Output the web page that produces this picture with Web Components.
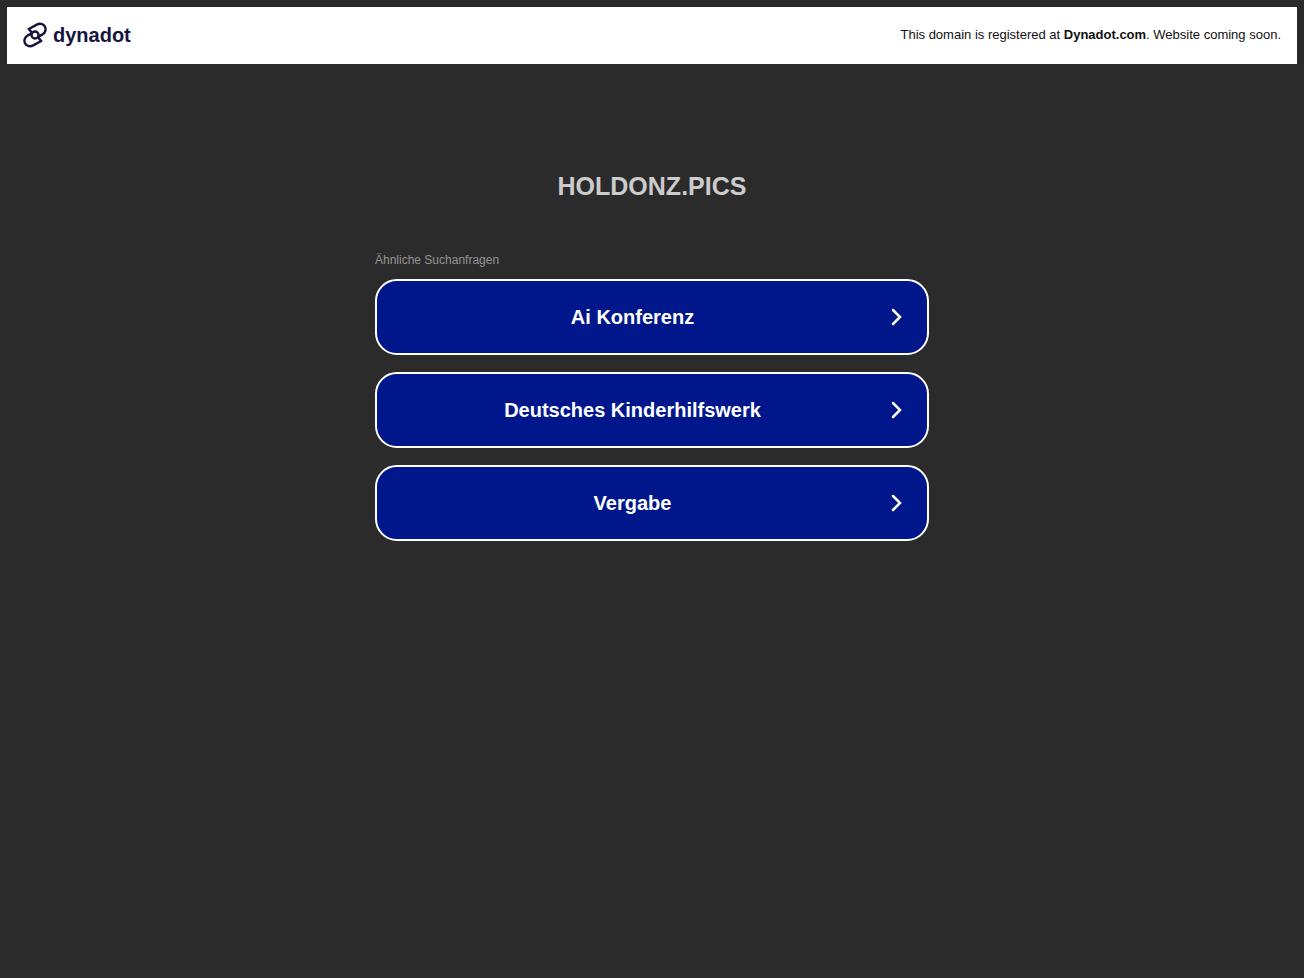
<!DOCTYPE html>
<html lang="de">
<head>
<meta charset="utf-8">
<meta name="viewport" content="width=device-width, initial-scale=1">
<title>holdonz.pics</title>
<style>
  body { margin: 0; background: #2b2b2b; font-family: "Liberation Sans", Arial, sans-serif; }
</style>
</head>
<body>
<parking-page>
  <registrar-bar slot="bar">This domain is registered at <b>Dynadot.com</b>. Website coming soon.</registrar-bar>
  <domain-title>HOLDONZ.PICS</domain-title>
  <related-searches label="Ähnliche Suchanfragen">
    <search-link>Ai Konferenz</search-link>
    <search-link>Deutsches Kinderhilfswerk</search-link>
    <search-link>Vergabe</search-link>
  </related-searches>
</parking-page>
<script>
  const define = (name, html, setup) => {
    const template = document.createElement('template');
    template.innerHTML = html;
    customElements.define(name, class extends HTMLElement {
      constructor() {
        super();
        this.attachShadow({ mode: 'open' }).append(template.content.cloneNode(true));
      }
      connectedCallback() { if (setup) setup(this); }
    });
  };

  define('parking-page', `
    <style>
      :host { display: block; box-sizing: border-box; min-height: 100vh; padding: 7px; }
      main { max-width: 554px; margin: 0 auto; }
    </style>
    <slot name="bar"></slot>
    <main><slot></slot></main>`);

  define('registrar-bar', `
    <style>
      :host { display: flex; align-items: center; justify-content: space-between; box-sizing: border-box;
        min-height: 57px; padding: 0 16px 1px; background: #fff; color: #111; }
      .logo { display: flex; align-items: center; gap: 6px; color: #15143f; text-decoration: none;
        font-size: 20px; line-height: 24px; font-weight: 700; }
      svg { display: block; width: 24px; height: 26px; }
      p { margin: 0; font-size: 13px; line-height: 20px; }
    </style>
    <a class="logo" href="#">
      <svg viewBox="0 0 25 26" fill="none" stroke="currentColor" stroke-width="2.5" stroke-linejoin="round" aria-hidden="true">
        <path d="M9.300 10.500 6 6.700 14.400 2.200C17.200.7 21 1.100 22.700 4.100c1.700 3 .5 6.600-2.200 8.200L15.600 15"/>
        <path d="M15.700 15.500 19 19.300l-8.400 4.500C7.800 25.300 4 24.900 2.300 21.900c-1.700-3-.5-6.600 2.200-8.200L9.400 11"/>
        <circle cx="12.500" cy="13" r="3.700"/>
      </svg>
      <span>dynadot</span>
    </a>
    <p><slot></slot></p>`);

  define('domain-title', `
    <style>
      :host { display: block; padding: 106px 0 48px; }
      h1 { margin: 0; color: #ccc; font-size: 25px; line-height: 32px; font-weight: 700; text-align: center; }
    </style>
    <h1><slot></slot></h1>`);

  define('related-searches', `
    <style>
      :host { display: block; }
      h2 { margin: 0 0 8px; color: #949494; font-size: 12px; line-height: 21px; font-weight: 400; }
      nav { display: grid; gap: 17px; }
    </style>
    <h2 id="label"></h2>
    <nav aria-labelledby="label"><slot></slot></nav>`,
    host => { host.shadowRoot.querySelector('h2').textContent = host.getAttribute('label'); });

  define('search-link', `
    <style>
      :host { display: block; }
      a { display: flex; align-items: center; box-sizing: border-box; min-height: 76px; padding: 0 23px;
        border: 2px solid #fff; border-radius: 22px; background: #00178b; color: #fff; text-decoration: none;
        font-size: 20px; line-height: 24px; font-weight: 700; }
      span { flex: 1; text-align: center; }
      svg { display: block; width: 14px; height: 20px; margin-left: 25px; }
    </style>
    <a href="#">
      <span><slot></slot></span>
      <svg viewBox="0 0 14 20" fill="none" stroke="currentColor" stroke-width="2.500" stroke-linecap="round" aria-hidden="true"><path d="M3 3l7 7-7 7"/></svg>
    </a>`);
</script>
</body>
</html>
